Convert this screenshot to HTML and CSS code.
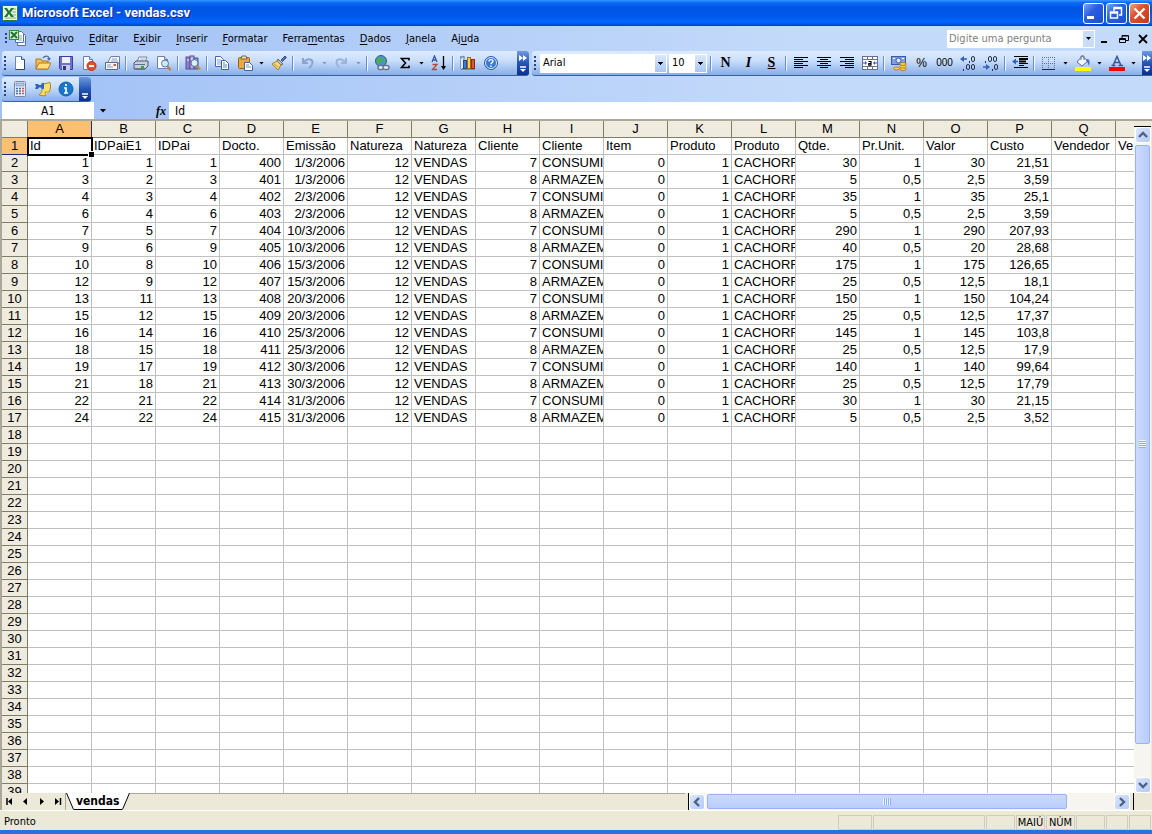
FILE: index.html
```html
<!DOCTYPE html>
<html lang="pt-BR">
<head>
<meta charset="utf-8">
<title>Microsoft Excel - vendas.csv</title>
<link rel="stylesheet" href="styles.css">
</head>
<body>
<header class="titlebar">
  <svg class="icon" viewBox="0 0 16 16"><rect x=".5" y=".5" width="15" height="15" rx="1" fill="#e9f3e4" stroke="#2f7a35"/><path d="M10 4h4M10 7h4M10 10h4M3 13h11" stroke="#7fb37f"/><path d="M2 3h3l2 3 2-3h3L8.500 7.500 12 12H9L7 9l-2 3H2l3.500-4.500z" fill="#1d7a30"/></svg>
  <h1 class="title">Microsoft Excel - vendas.csv</h1>
  <div class="window-buttons">
    <button class="winbtn" aria-label="Minimizar"><svg viewBox="0 0 21 21"><path d="M4 14.500h7" stroke="#fff" stroke-width="3"/></svg></button>
    <button class="winbtn" aria-label="Restaurar"><svg viewBox="0 0 21 21"><path d="M8 8V4.500h7.500V12H13M8 5.500h7" fill="none" stroke="#fff" stroke-width="1.500"/><path d="M4.500 9h7v6h-7zM4 10h8" fill="none" stroke="#fff" stroke-width="1.500"/></svg></button>
    <button class="winbtn winbtn-close" aria-label="Fechar"><svg viewBox="0 0 21 21"><path d="M5.500 5.500l10 10M15.500 5.500l-10 10" stroke="#fff" stroke-width="2.400"/></svg></button>
  </div>
</header>

<nav class="menubar" aria-label="Menu">
  <i class="grip"></i>
  <svg class="icon-doc" viewBox="0 0 18 17"><path d="M9.500 3.500h5l2 2v10h-8z" fill="#fff" stroke="#5870a8"/><path d="M6.500 1.500h6l2 2v9h-8z" fill="#fff" stroke="#5870a8"/><path d="M9 6h4M9 8h4M9 10h4M14 12h2" stroke="#8aa4d8"/><rect x=".5" y=".5" width="9" height="9" fill="#d9efd4" stroke="#3a8a3c"/><path d="M2 2l6 6M8 2L2 8" stroke="#1c7a2e" stroke-width="2"/></svg>
  <ul class="menus">
    <li><button class="menu"><u>A</u>rquivo</button></li>
    <li><button class="menu"><u>E</u>ditar</button></li>
    <li><button class="menu">E<u>x</u>ibir</button></li>
    <li><button class="menu"><u>I</u>nserir</button></li>
    <li><button class="menu"><u>F</u>ormatar</button></li>
    <li><button class="menu">Ferra<u>m</u>entas</button></li>
    <li><button class="menu"><u>D</u>ados</button></li>
    <li><button class="menu"><u>J</u>anela</button></li>
    <li><button class="menu">Aj<u>u</u>da</button></li>
  </ul>
  <div class="ask">
    <input class="ask-input" type="text" placeholder="Digite uma pergunta" aria-label="Digite uma pergunta">
    <button class="ask-drop" aria-label="Perguntas recentes"><i class="caret"></i></button>
  </div>
  <div class="doc-buttons">
    <button aria-label="Minimizar pasta"><svg viewBox="0 0 12 12"><path d="M2 9h6" stroke="#000" stroke-width="2"/></svg></button>
    <button aria-label="Restaurar pasta"><svg viewBox="0 0 12 12"><path d="M4 5V2.500h6.500v5H8M4 3h6" fill="none" stroke="#000"/><path d="M1.500 5.500h6v4h-6zM2 6.500h6" fill="none" stroke="#000"/></svg></button>
    <button aria-label="Fechar pasta"><svg viewBox="0 0 12 12"><path d="M2 2l8 8M10 2l-8 8" stroke="#000" stroke-width="1.800"/></svg></button>
  </div>
</nav>

<div class="toolrow">
  <div class="toolbar toolbar-standard" role="toolbar" aria-label="Padrão">
    <i class="grip"></i>
    <button class="tool" aria-label="Novo"><svg viewBox="0 0 16 16"><path d="M3.500 1.500h6l3 3v10h-9z" fill="#fff" stroke="#6b86b8"/><path d="M12.500 4.500v10h-9" fill="none" stroke="#31496f"/><path d="M9.500 1.500v3h3" fill="#cfdcf2" stroke="#42597f"/></svg></button>
    <button class="tool" aria-label="Abrir"><svg viewBox="0 0 16 16"><path d="M1 4h5l1 2h6v8H1z" fill="#f2c14e" stroke="#a8742a"/><path d="M1 14l3-6h12l-3 6z" fill="#ffdf7e" stroke="#b07a22"/><path d="M8 3c2-2.500 5-2.500 6 0" fill="none" stroke="#4a6da8" stroke-width="1.300"/><path d="M12 3h4l-2 3z" fill="#4a6da8"/></svg></button>
    <button class="tool" aria-label="Salvar"><svg viewBox="0 0 16 16"><path d="M1.500 1.500h13v13h-12l-1-1z" fill="#6d72d0" stroke="#3c3f99"/><rect x="4" y="2" width="8" height="6" fill="#eef2ff"/><rect x="4" y="10" width="8" height="5" fill="#c5cbe8"/><rect x="5" y="11" width="3" height="4" fill="#34377f"/></svg></button>
    <button class="tool" aria-label="Permissão"><svg viewBox="0 0 16 16"><path d="M2.500 1.500h6l3 3v10h-9z" fill="#fff" stroke="#6b7fa8"/><path d="M8.500 1.500v3h3" fill="#d5def0" stroke="#6b7fa8"/><circle cx="10.500" cy="11" r="4.500" fill="#e2502f" stroke="#b5331b"/><path d="M8 11h5" stroke="#fff" stroke-width="2"/></svg></button>
    <button class="tool" aria-label="Email"><svg viewBox="0 0 16 16"><path d="M4 7l3-5.500h8.500V8" fill="#f7f9ff" stroke="#6f7f9f"/><path d="M8 4h5M7 6h7" stroke="#8aa0cf"/><path d="M1.500 7.500h12v7h-12z" fill="#f3f6fc" stroke="#5a6a88"/><rect x="9.500" y="9" width="2.500" height="2" fill="#d4552e"/><path d="M3 10h4M3 12h6" stroke="#8c9ab5"/><path d="M13.500 8h2v6" fill="none" stroke="#5a6a88"/></svg></button>
    <i class="sep"></i>
    <button class="tool" aria-label="Imprimir"><svg viewBox="0 0 16 16"><path d="M4 7l2-5h8l-2 5z" fill="#fff" stroke="#7082a5"/><path d="M7 4h5M6 6h5" stroke="#9fb0cf"/><path d="M1 8l2-2h12v5l-3 3H1z" fill="#c8d0dd" stroke="#4d5a74"/><path d="M2 9.500h10" stroke="#5e6c86"/><path d="M8 12h3" stroke="#39a339" stroke-width="2"/><path d="M2 14h10" stroke="#555f70"/></svg></button>
    <button class="tool" aria-label="Visualizar impressão"><svg viewBox="0 0 16 16"><path d="M1.500 1.500h7l3 3v9h-10z" fill="#fff" stroke="#6d82ab"/><path d="M8.500 1.500v3h3" fill="#d5def0" stroke="#6b7fa8"/><circle cx="9" cy="8.500" r="3.500" fill="#cfe8f8" stroke="#54749c"/><path d="M11.500 11.500L14.500 15" stroke="#c8782a" stroke-width="2.200"/></svg></button>
    <i class="sep"></i>
    <button class="tool" aria-label="Pesquisar"><svg viewBox="0 0 16 16"><rect x="1" y="2" width="4" height="12" fill="#8e80c8" stroke="#5b4f96"/><rect x="5" y="1" width="4" height="13" fill="#b9abe0" stroke="#5b4f96"/><path d="M9 3h4v11H9z" fill="#7788c8" stroke="#46559b"/><path d="M2 5h2M6 4h2M10 5h2" stroke="#fff"/><circle cx="9.500" cy="8" r="3.500" fill="#d9efff" stroke="#50719b"/><path d="M12 11l3 3.500" stroke="#cf8630" stroke-width="2.200"/></svg></button>
    <i class="sep"></i>
    <button class="tool" aria-label="Copiar"><svg viewBox="0 0 16 16"><path d="M1.500 1.500h5l3 3v7h-8z" fill="#fff" stroke="#4566a8"/><path d="M3 5h4M3 7h4M3 9h4" stroke="#7c9bd6"/><path d="M7.500 5.500h4l3 3v6h-7z" fill="#fff" stroke="#3c5d9f"/><path d="M9 8h2M9 10h4M9 12h4" stroke="#5b80c8"/></svg></button>
    <button class="tool" aria-label="Colar"><svg viewBox="0 0 16 16"><rect x="1.500" y="2.500" width="11" height="11" rx="1" fill="#e9a93c" stroke="#95651d"/><path d="M4 4l1-3h4l1 3z" fill="#e8e0c8" stroke="#77683f"/><path d="M7.500 7.500h5l3 3v5h-8z" fill="#fff" stroke="#46659f"/><path d="M9 10h3M9 12h5" stroke="#7090ca"/></svg></button>
    <button class="drop" aria-label="Opções de colar"><i class="caret"></i></button>
    <button class="tool" aria-label="Pincel"><svg viewBox="0 0 16 16"><path d="M10 5l4-4 1.500 1.500-4 4z" fill="#5c6fb5" stroke="#3d4b86"/><path d="M7 4l5 5-2 1-4-4z" fill="#b8bccb" stroke="#626a82"/><path d="M6 6l4 4-3 5-6-6z" fill="#f5d675" stroke="#a5802e"/><path d="M3 9l4 3" stroke="#c59a3c"/></svg></button>
    <i class="sep"></i>
    <button class="tool" aria-label="Desfazer" disabled><svg viewBox="0 0 16 16"><path d="M3 3v5h5M3.500 7.500c4-5 9-3.500 9 0 0 3-2 4-3.500 5.500" fill="none" stroke="#8ba4d0" stroke-width="2"/></svg></button>
    <button class="drop" aria-label="Lista desfazer" disabled><i class="caret caret-off"></i></button>
    <button class="tool" aria-label="Refazer" disabled><svg viewBox="0 0 16 16"><path d="M12 3v5H7M11.500 7.500c-4-5-9-3.500-9 0 0 3 2 4 3 5" fill="none" stroke="#9cb4dc" stroke-width="2"/></svg></button>
    <button class="drop" aria-label="Lista refazer" disabled><i class="caret caret-off"></i></button>
    <i class="sep"></i>
    <button class="tool" aria-label="Inserir hiperlink"><svg viewBox="0 0 16 16"><circle cx="7" cy="6" r="5.500" fill="#4c8fdc" stroke="#2d5d9f"/><path d="M4 2l4 1 1 3-3 1-2 3-2-4zM9 3l3 2-2 4z" fill="#48b048"/><rect x="4" y="10.500" width="6" height="4" rx="2" fill="#e8edf6" stroke="#69768d" stroke-width="1.400"/><rect x="9" y="10.500" width="6" height="4" rx="2" fill="#e8edf6" stroke="#69768d" stroke-width="1.400"/></svg></button>
    <button class="tool" aria-label="AutoSoma"><svg viewBox="0 0 16 16"><path d="M12 5.500V3.500H4.500L8.500 8l-4 4.500H12v-2" fill="none" stroke="#000" stroke-width="1.600"/></svg></button>
    <button class="drop" aria-label="Funções"><i class="caret"></i></button>
    <button class="tool" aria-label="Classificar"><svg viewBox="0 0 16 16"><path d="M1 7l2.500-6L6 7M2 5h3" fill="none" stroke="#2f5a9e" stroke-width="1.300"/><path d="M1.500 9.500H6l-4.500 5H6" fill="none" stroke="#b04a40" stroke-width="1.300"/><path d="M12.500 1v12" stroke="#000" stroke-width="1.300"/><path d="M10 11h5l-2.500 4z"/></svg></button>
    <i class="sep"></i>
    <button class="tool" aria-label="Gráfico"><svg viewBox="0 0 16 16"><path d="M1 1v13h14" fill="none" stroke="#3c5a90"/><path d="M1 3l3-2v11l-3 3" fill="#dce7fa" stroke="#5270a8"/><rect x="3.500" y="5.500" width="3" height="8" fill="#3f78d8" stroke="#234c94"/><rect x="7.500" y="2.500" width="3" height="11" fill="#ffd33b" stroke="#9c6c19"/><rect x="11.500" y="4.500" width="3" height="9" fill="#df5834" stroke="#8c2c17"/></svg></button>
    <button class="tool" aria-label="Ajuda"><svg viewBox="0 0 16 16"><circle cx="8" cy="8" r="6.500" fill="#3877d8" stroke="#2d5cac"/><circle cx="8" cy="8" r="5.500" fill="none" stroke="#d6e7ff"/><path d="M6 6.500C6 4 10 4 10 6.300 10 7.800 8 7.600 8 9.300" fill="none" stroke="#fff" stroke-width="1.400"/><path d="M8 10.500v1.500" stroke="#fff" stroke-width="1.500"/></svg></button>
    <button class="more" aria-label="Opções da barra padrão"><svg viewBox="0 0 12 25"><path d="M2 4l4 3-4 3zM6 4l4 3-4 3z" fill="#fff"/><path d="M3 16h6" stroke="#fff" stroke-width="1.400"/><path d="M3 18h6l-3 3z" fill="#fff"/></svg></button>
  </div>

  <div class="toolbar toolbar-format" role="toolbar" aria-label="Formatação">
    <i class="grip"></i>
    <select class="combo combo-font" aria-label="Fonte"><option>Arial</option></select>
    <select class="combo combo-size" aria-label="Tamanho da fonte"><option>10</option></select>
    <i class="sep"></i>
    <button class="tool letter bold">N</button>
    <button class="tool letter italic">I</button>
    <button class="tool letter under">S</button>
    <i class="sep"></i>
    <button class="tool" aria-label="Alinhar à esquerda"><svg viewBox="0 0 16 16"><path d="M1 2.500h14M1 4.500h9M1 6.500h14M1 8.500h9M1 10.500h14M1 12.500h9" stroke="#000"/></svg></button>
    <button class="tool" aria-label="Centralizar"><svg viewBox="0 0 16 16"><path d="M1 2.500h14M4 4.500h8M1 6.500h14M4 8.500h8M1 10.500h14M4 12.500h8" stroke="#000"/></svg></button>
    <button class="tool" aria-label="Alinhar à direita"><svg viewBox="0 0 16 16"><path d="M1 2.500h14M6 4.500h9M1 6.500h14M6 8.500h9M1 10.500h14M6 12.500h9" stroke="#000"/></svg></button>
    <button class="tool" aria-label="Mesclar e centralizar"><svg viewBox="0 0 16 16"><rect x=".5" y="1.500" width="15" height="13" fill="#fff" stroke="#66728a"/><path d="M1 4.500h14M1 11.500h14M5.500 2v2M10.500 2v2M5.500 12v2M10.500 12v2" stroke="#66728a"/><path d="M1 8h3M12 8h3" stroke="#2d5cac"/><path d="M3 6l2 2-2 2zM13 6l-2 2 2 2z" fill="#2d5cac"/><path d="M6.500 6.500h2.500v4M9 8.500H6.800v1.700H9" fill="none" stroke="#000" stroke-width="1.200"/></svg></button>
    <i class="sep"></i>
    <button class="tool" aria-label="Moeda"><svg viewBox="0 0 16 16"><rect x=".5" y="1.500" width="14" height="8" fill="#7e9fe0" stroke="#3a5ca8"/><circle cx="7.500" cy="5.500" r="2.500" fill="#dce8ff" stroke="#3a5ca8"/><path d="M2 3.500h2M11 3.500h2" stroke="#fff"/><g fill="#ffd24c" stroke="#a8701c" stroke-width=".8"><ellipse cx="12" cy="14" rx="3.200" ry="1.500"/><ellipse cx="12" cy="11.500" rx="3.200" ry="1.500"/><ellipse cx="12" cy="9" rx="3.200" ry="1.500"/><ellipse cx="5.500" cy="13.500" rx="3" ry="1.500"/></g></svg></button>
    <button class="tool num">%</button>
    <button class="tool num num-small">000</button>
    <button class="tool" aria-label="Aumentar casas decimais"><svg viewBox="0 0 16 16"><path d="M2 4h5" stroke="#2f62b8" stroke-width="1.500"/><path d="M0 4l4-3v6z" fill="#2f62b8"/><g fill="none" stroke="#26324d"><rect x="11.500" y="1.500" width="3" height="5" rx="1.500"/><rect x="6.500" y="9.500" width="3" height="5" rx="1.500"/><rect x="11.500" y="9.500" width="3" height="5" rx="1.500"/><path d="M9.500 6v2M3.500 14v2"/></g></svg></button>
    <button class="tool" aria-label="Diminuir casas decimais"><svg viewBox="0 0 16 16"><path d="M0 12h5" stroke="#2f62b8" stroke-width="1.500"/><path d="M7 12L3 9v6z" fill="#2f62b8"/><g fill="none" stroke="#26324d"><rect x="5.500" y="1.500" width="3" height="5" rx="1.500"/><rect x="10.500" y="1.500" width="3" height="5" rx="1.500"/><rect x="11.500" y="9.500" width="3" height="5" rx="1.500"/><path d="M2.500 6v2M9.500 14v2"/></g></svg></button>
    <i class="sep"></i>
    <button class="tool" aria-label="Diminuir recuo"><svg viewBox="0 0 16 16"><path d="M2 1.500h14M7 10.500h5M2 12.500h14M7 8.500h9" stroke="#000"/><path d="M7 4h9M7 6.500h7" stroke="#000" stroke-width="1.800"/><path d="M0 6.500l4-3v6z" fill="#2f62b8"/><path d="M3 6.500h3" stroke="#2f62b8" stroke-width="1.500"/></svg></button>
    <i class="sep"></i>
    <button class="tool" aria-label="Bordas"><svg viewBox="0 0 16 16"><path d="M1.500 2v12M7.500 2v12M13.500 2v12M1 2.500h13M1 8.500h13" stroke="#5c6f98" stroke-dasharray="1 1"/><path d="M1 14.500h13" stroke="#1b2a4a"/></svg></button>
    <button class="drop" aria-label="Opções de borda"><i class="caret"></i></button>
    <button class="tool" aria-label="Cor de preenchimento"><svg viewBox="0 0 16 16"><path d="M7 1l6 5-6 5-5-4z" fill="#f3f6fc" stroke="#5f6f92"/><path d="M6 5V2c0-2 3-2 3 0v3" fill="none" stroke="#5f6f92"/><path d="M12 4c3 0 3 3 2 7-1-2-1-4-3-5z" fill="#3f70c8"/><path d="M0 12h16v4H0z" fill="#ff0"/></svg></button>
    <button class="drop" aria-label="Opções de preenchimento"><i class="caret"></i></button>
    <button class="tool" aria-label="Cor da fonte"><svg viewBox="0 0 16 16"><path d="M4 10.500L8 1.500l4 9M5.500 7.500h5M2.500 10.500h4M9.500 10.500h4.500" fill="none" stroke="#36588f" stroke-width="1.500"/><path d="M0 12h16v4H0z" fill="#f00"/></svg></button>
    <button class="drop" aria-label="Opções de cor"><i class="caret"></i></button>
    <button class="more more-edge" aria-label="Opções da barra de formatação"><svg viewBox="0 0 12 25"><path d="M2 4l4 3-4 3zM6 4l4 3-4 3z" fill="#fff"/><path d="M3 16h6" stroke="#fff" stroke-width="1.400"/><path d="M3 18h6l-3 3z" fill="#fff"/></svg></button>
  </div>
</div>

<div class="toolrow toolrow-last">
  <div class="toolbar toolbar-extra" role="toolbar" aria-label="Extras">
    <i class="grip"></i>
    <button class="tool" aria-label="Calculadora"><svg viewBox="0 0 16 16"><rect x="2.500" y=".5" width="11" height="15" rx="1" fill="#e7edf8" stroke="#7788a8"/><rect x="4" y="2" width="8" height="3" fill="#b4c8ec" stroke="#6c84b4" stroke-width=".6"/><path d="M4 7.500h6M4 10h6M4 12.500h6" stroke="#4a67a8" stroke-width="1.500" stroke-dasharray="2 1"/><path d="M10 7.500h2M10 10h2M10 12.500h2" stroke="#d0584a" stroke-width="1.500"/></svg></button>
    <button class="tool" aria-label="Comentário"><svg viewBox="0 0 16 16"><path d="M7 3c3 0 5-1 8-1.500 1 3 .5 6-.5 9L10 15l-6-1c2-1.500 3-3 3-5z" fill="#fbe06e" stroke="#a8862e"/><path d="M10 15c1-1.500 0-3 0-4 2 .5 3 0 4.500-.5" fill="#fff3b4" stroke="#a8862e"/><path d="M0 3h3l1 1h2l1-2h2v6H7L6 6.500H4L3 8H0l1-2.500z" fill="#3465b8"/></svg></button>
    <button class="tool" aria-label="Informações"><svg viewBox="0 0 16 16"><circle cx="8" cy="8" r="7" fill="#1976c8" stroke="#1660a8"/><path d="M8 3v2M6 7h2v5M6 12h4" fill="none" stroke="#fff" stroke-width="1.700"/></svg></button>
    <button class="more" aria-label="Opções da barra extra"><svg viewBox="0 0 12 25"><path d="M3 17h6" stroke="#fff" stroke-width="1.400"/><path d="M3 19h6l-3 3z" fill="#fff"/></svg></button>
  </div>
</div>

<div class="formula-row">
  <input class="name-box" type="text" value="A1" aria-label="Caixa de nome">
  <button class="name-drop" aria-label="Nomes definidos"><i class="caret caret-wide"></i></button>
  <button class="fx" aria-label="Inserir função">fx</button>
  <input class="formula" type="text" value="Id" aria-label="Barra de fórmulas">
</div>

<main class="workbook">
  <div class="sheet-area">
    <div class="sheet"><table class="grid" id="grid"></table></div>
    <div class="vscroll">
      <i class="split-h"></i>
      <button class="sbtn" aria-label="Rolar para cima"><svg viewBox="0 0 14 14"><path d="M3 9l4-4 4 4" fill="none" stroke="#4d6185" stroke-width="2.400"/></svg></button>
      <div class="track-v"><div class="thumb-v"><i class="ridges-v"></i></div></div>
      <button class="sbtn" aria-label="Rolar para baixo"><svg viewBox="0 0 14 14"><path d="M3 5l4 4 4-4" fill="none" stroke="#4d6185" stroke-width="2.400"/></svg></button>
    </div>
  </div>
  <div class="tabrow">
    <div class="tab-nav">
      <button aria-label="Primeira planilha"><svg viewBox="0 0 9 9"><path d="M2 1v7" stroke="#000" stroke-width="1.500"/><path d="M7 1v7L3 4.500z"/></svg></button>
      <button aria-label="Planilha anterior"><svg viewBox="0 0 9 9"><path d="M6 1v7L2 4.500z"/></svg></button>
      <button aria-label="Próxima planilha"><svg viewBox="0 0 9 9"><path d="M3 1v7l4-3.500z"/></svg></button>
      <button aria-label="Última planilha"><svg viewBox="0 0 9 9"><path d="M7.500 1v7" stroke="#000" stroke-width="1.500"/><path d="M2 1v7l4-3.500z"/></svg></button>
    </div>
    <div class="tabs">
      <button class="tab">
        <svg viewBox="0 0 8 17"><path d="M0 0l7 16h1V0z" fill="#fff"/><path d="M.5 0l7 16.500" fill="none" stroke="#000"/></svg>
        <span class="tab-name">vendas</span>
        <svg viewBox="0 0 8 17"><path d="M8 0L1 16H0V0z" fill="#fff"/><path d="M7.500 0l-7 16.500" fill="none" stroke="#000"/></svg>
      </button>
    </div>
    <div class="hscroll">
      <i class="split-v"></i>
      <button class="sbtn" aria-label="Rolar para a esquerda"><svg viewBox="0 0 14 14"><path d="M9 3L5 7l4 4" fill="none" stroke="#4d6185" stroke-width="2.400"/></svg></button>
      <div class="track-h"><div class="thumb-h"><i class="ridges-h"></i></div></div>
      <button class="sbtn" aria-label="Rolar para a direita"><svg viewBox="0 0 14 14"><path d="M5 3l4 4-4 4" fill="none" stroke="#4d6185" stroke-width="2.400"/></svg></button>
      <i class="split-v"></i>
    </div>
    <div class="size-corner"></div>
  </div>
</main>

<footer class="status">
  <span class="status-text">Pronto</span>
  <span class="pane pane-m"></span>
  <span class="pane pane-xl"></span>
  <span class="pane pane-s"></span>
  <span class="pane pane-s">MAIÚ</span>
  <span class="pane pane-s">NÚM</span>
  <span class="pane pane-s"></span>
  <span class="pane pane-xs"></span>
  <span class="pane pane-xs"></span>
</footer>
<script src="grid.js"></script>
</body>
</html>
```
FILE: styles.css
```css
* { box-sizing: border-box; }
body {
  margin: 0;
  height: 100vh;
  display: flex;
  flex-direction: column;
  overflow: hidden;
  background: linear-gradient(to right, #a0c0f6, #c4dafa 70%);
  font: 11px/14px "DejaVu Sans Condensed", "Liberation Sans", sans-serif;
  color: #000;
}
button, input, select { font: inherit; color: inherit; margin: 0; padding: 0; border: 0; border-radius: 0; background: none; }
button { display: flex; align-items: center; justify-content: center; }
svg { display: block; flex: none; }

.titlebar {
  flex: none;
  display: flex;
  align-items: center;
  height: 26px;
  padding: 0 2px;
  background: linear-gradient(#3d95ff, #0a6cf6 10%, #0054e3 30%, #0058ea 60%, #0066ff 85%, #0040cf);
}
.icon { width: 16px; height: 16px; }
.title { margin: 0 0 0 4px; font: bold 13px/16px Roboto, sans-serif; color: #fff; text-shadow: 1px 1px #0a2a8a; }
.window-buttons { margin-left: auto; display: flex; gap: 2px; }
.winbtn {
  width: 21px;
  height: 21px;
  border: 1px solid #fff;
  border-radius: 3px;
  background: linear-gradient(135deg, #7ba3f5, #2a5fe0 40%, #1c4fd0);
}
.winbtn svg { width: 21px; height: 21px; }
.winbtn-close { background: linear-gradient(135deg, #f0a58c, #e0502c 40%, #c43a16); }

.menubar { flex: none; display: flex; align-items: center; height: 25px; padding: 0 3px 0 4px; }
.grip {
  flex: none;
  width: 6px;
  height: 14px;
  background: repeating-linear-gradient(#27418a 0 2px, transparent 2px 4px) 2px 0 / 2px 14px no-repeat;
}
.menubar .grip { width: 5px; height: 12px; background-position: 1px 0; }
.icon-doc { width: 18px; height: 17px; }
.menus { display: flex; gap: 1px; list-style: none; margin: 0 0 0 2px; padding: 0; }
.menu { display: block; padding: 3px 7px; }
.menu u { text-underline-offset: 2px; }
.ask { margin-left: auto; display: flex; width: 148px; height: 18px; background: #fff; }
.ask-input { flex: 1; min-width: 0; padding: 0 2px; }
.ask-input::placeholder { color: #7f7f7f; opacity: 1; }
.ask-drop { width: 11px; margin: 1px; background: #c9dcf8; }
.doc-buttons { display: flex; gap: 7px; margin-left: 4px; }
.doc-buttons svg { width: 12px; height: 12px; }
.caret { width: 5px; height: 3px; background: #000; clip-path: polygon(0 0, 100% 0, 50% 100%); }
.caret-off { background: #8496b4; }
.caret-wide { width: 7px; height: 4px; }

.toolrow { flex: none; display: flex; gap: 3px; height: 26px; padding-left: 2px; }
.toolrow-last { height: 25px; }
.toolbar {
  display: flex;
  align-items: center;
  height: 25px;
  border-bottom: 1px solid #3b619c;
  border-radius: 3px;
  background: linear-gradient(#ddecfe, #cadefb 40%, #86aee8);
  overflow: hidden;
}
.toolbar-standard { flex: none; width: 527px; }
.toolbar-format { flex: 1; border-radius: 3px 0 0 3px; }
.toolbar-format .grip { margin-right: 2px; }
.toolbar-extra { width: 89px; }
.tool { flex: none; width: 23px; height: 22px; }
.tool svg { width: 16px; height: 16px; }
.drop { flex: none; width: 11px; height: 22px; }
.sep { flex: none; width: 6px; height: 15px; background: linear-gradient(to right, #6a8ccb 50%, #f1f9ff 50%) 2px 0 / 2px 15px no-repeat; }
.more {
  flex: none;
  align-self: stretch;
  width: 12px;
  margin-left: auto;
  background: linear-gradient(#6f9be0, #2456b5 50%, #0a2f8c);
}
.more svg { width: 12px; height: 25px; }
.more-edge { width: 10px; }
.combo {
  flex: none;
  height: 19px;
  padding: 0 14px 0 2px;
  appearance: none;
  border: 1px solid #fff;
  background:
    linear-gradient(#000, #000) right 5px top 9px / 1px 1px no-repeat,
    linear-gradient(#000, #000) right 4px top 8px / 3px 1px no-repeat,
    linear-gradient(#000, #000) right 3px top 7px / 5px 1px no-repeat,
    linear-gradient(#dbe8fc, #a9c6f3) right / 11px 100% no-repeat,
    #fff;
}
.combo-font { width: 127px; margin-right: 2px; }
.combo-size { width: 38px; margin-right: 1px; }
.letter { font: bold 14px/16px "Liberation Serif", serif; }
.italic { font-style: italic; }
.under { text-decoration: underline; }
.num { font: 12px/16px "Liberation Sans", sans-serif; }
.num-small { font-size: 10px; }

.formula-row { flex: none; display: flex; height: 17px; font-size: 12px; }
.name-box { width: 92px; margin-left: 2px; text-align: center; background: #fff; }
.name-drop { width: 18px; }
.fx { width: 26px; margin-left: 31px; padding-left: 10px; font: italic bold 12px/16px "Liberation Serif", serif; }
.formula { flex: 1; min-width: 0; padding: 0 6px; background: #fff; }

.workbook { flex: 1; min-height: 0; display: flex; flex-direction: column; background: #ece9d8; }
.sheet-area { flex: 1; min-height: 0; display: flex; border-top: 2px solid #aca899; border-left: 2px solid #aca899; padding-right: 1px; }
.sheet { flex: 1; min-width: 0; overflow: hidden; background: #fff; }
.grid { width: 1178px; table-layout: fixed; border-collapse: separate; border-spacing: 0; font: 13px/16px "Liberation Sans", sans-serif; }
.grid th { height: 17px; padding: 0; font-weight: normal; background: #efebde; border-right: 1px solid #7e7d68; border-bottom: 1px solid #7e7d68; }
.grid .corner { width: 26px; }
.grid .on { background: #fdc070; border-color: #1a2a8a; }
.grid td { height: 17px; padding: 0 2px; overflow: hidden; white-space: nowrap; border-right: 1px solid #c0c0c0; border-bottom: 1px solid #c0c0c0; }
.grid .n { text-align: right; }
.grid .active { position: relative; overflow: visible; }
.cursor { position: absolute; inset: -1px -2px -2px -1px; border: 2px solid #000; }
.cursor::after { content: ""; position: absolute; right: -3px; bottom: -3px; width: 5px; height: 5px; background: #000; border: 1px solid #fff; border-width: 1px 0 0 1px; }

.vscroll { width: 17px; flex: none; display: flex; flex-direction: column; align-items: center; background: #f6f5ef; }
.split-h { align-self: stretch; flex: none; height: 6px; background: #ece9d8; border-bottom: 1px solid #000; }
.sbtn { flex: none; width: 16px; height: 16px; border: 1px solid #fff; border-radius: 3px; background: linear-gradient(135deg, #dbe5fe, #b4caf8); }
.sbtn svg { width: 14px; height: 14px; }
.track-v { flex: 1; align-self: stretch; min-height: 0; padding: 2px 1px; }
.thumb-v { display: flex; align-items: center; justify-content: center; height: 95%; border: 1px solid #98b4ee; border-radius: 2px; background: linear-gradient(to right, #cbdafd, #b9cdfb); }
.ridges-v { width: 7px; height: 8px; background: repeating-linear-gradient(#eef4fe 0 1px, #8cb0f8 1px 2px); }

.tabrow { flex: none; display: flex; height: 17px; }
.tab-nav { display: flex; align-items: center; justify-content: space-between; width: 66px; padding: 0 3px; border-left: 2px solid #aca899; border-right: 1px solid #aca899; }
.tab-nav svg { width: 9px; height: 9px; }
.tabs { flex: 1; display: flex; border-top: 1px solid #aca899; }
.tab { margin-top: -1px; height: 17px; }
.tab svg { width: 8px; height: 17px; }
.tab-name { height: 17px; padding: 0 2px; font-weight: bold; font-size: 12px; line-height: 16px; background: #fff; border-bottom: 1px solid #000; }
.hscroll { flex: none; display: flex; align-items: center; width: 39%; min-width: 160px; background: #f6f5ef; }
.split-v { flex: none; width: 4px; height: 17px; background: #ece9d8; border-right: 1px solid #000; }
.size-corner { flex: none; width: 18px; }
.track-h { flex: 1; padding: 0 2px; }
.thumb-h { display: flex; align-items: center; justify-content: center; width: 89%; height: 15px; border: 1px solid #98b4ee; border-radius: 2px; background: linear-gradient(#cbdafd, #b9cdfb); }
.ridges-h { width: 8px; height: 7px; background: repeating-linear-gradient(to right, #eef4fe 0 1px, #8cb0f8 1px 2px); }

.status {
  flex: none;
  display: flex;
  align-items: center;
  gap: 1px;
  height: 24px;
  padding: 3px 1px 0 4px;
  background: #ece9d8;
  border-top: 1px solid #fff;
  border-bottom: 4px solid #2b6fe0;
}
.status-text { margin-right: auto; }
.pane { height: 15px; border: 1px solid #d0cdbf; line-height: 14px; text-align: center; white-space: nowrap; }
.pane-m { width: 34px; }
.pane-xl { width: 112px; }
.pane-s { width: 29px; }
.pane-xs { width: 22px; }
```
FILE: grid.js
```js
const columns = "ABCDEFGHIJKLMNOPQ".split("").concat("");
const titles = ["Id", "IDPaiE1", "IDPai", "Docto.", "Emissão", "Natureza", "Natureza", "Cliente", "Cliente",
  "Item", "Produto", "Produto", "Qtde.", "Pr.Unit.", "Valor", "Custo", "Vendedor", "Ve"];

// id, parent row, date, quantity, value, cost
const sales = [
  [1, 1, "1/3/2006", 30, "30", "21,51"],
  [3, 2, "1/3/2006", 5, "2,5", "3,59"],
  [4, 3, "2/3/2006", 35, "35", "25,1"],
  [6, 4, "2/3/2006", 5, "2,5", "3,59"],
  [7, 5, "10/3/2006", 290, "290", "207,93"],
  [9, 6, "10/3/2006", 40, "20", "28,68"],
  [10, 8, "15/3/2006", 175, "175", "126,65"],
  [12, 9, "15/3/2006", 25, "12,5", "18,1"],
  [13, 11, "20/3/2006", 150, "150", "104,24"],
  [15, 12, "20/3/2006", 25, "12,5", "17,37"],
  [16, 14, "25/3/2006", 145, "145", "103,8"],
  [18, 15, "25/3/2006", 25, "12,5", "17,9"],
  [19, 17, "30/3/2006", 140, "140", "99,64"],
  [21, 18, "30/3/2006", 25, "12,5", "17,79"],
  [22, 21, "31/3/2006", 30, "30", "21,15"],
  [24, 22, "31/3/2006", 5, "2,5", "3,52"]
];

const rows = [titles].concat(sales.map(([id, parent, date, qty, value, cost], i) => {
  const retail = i % 2 === 0;
  return [id, parent, id, 400 + i, date, 12, "VENDAS", retail ? 7 : 8, retail ? "CONSUMI" : "ARMAZEM",
    0, 1, "CACHORR", qty, retail ? "1" : "0,5", value, cost, "", ""];
}));

let html = "<thead><tr><th class='corner'></th>" +
  columns.map((c, i) => `<th scope="col"${i === 0 ? " class='on'" : ""}>${c}</th>`).join("") + "</tr></thead><tbody>";
for (let r = 1; r <= 39; r++) {
  const cells = rows[r - 1] || columns.map(() => "");
  html += `<tr><th scope="row"${r === 1 ? " class='on'" : ""}>${r}</th>` + cells.map((v, c) => {
    if (r === 1 && c === 0) return `<td class="active">${v}<span class="cursor"></span></td>`;
    const numeric = /^\d/.test(String(v));
    return `<td${numeric ? " class='n'" : ""}>${v}</td>`;
  }).join("") + "</tr>";
}
document.getElementById("grid").innerHTML = html + "</tbody>";
```
